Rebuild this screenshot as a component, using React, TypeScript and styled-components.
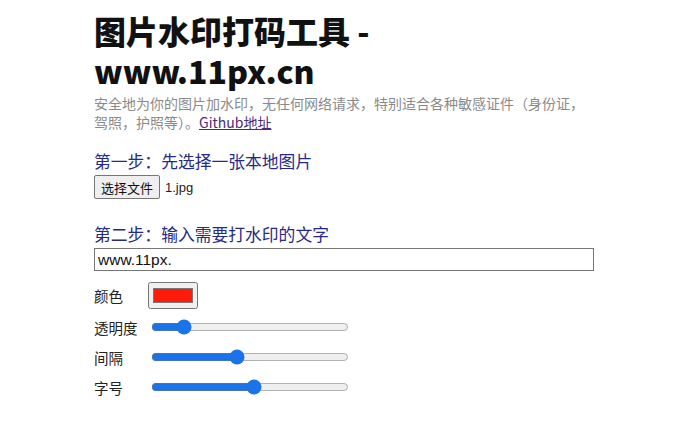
import styled, { createGlobalStyle } from 'styled-components';

const GlobalStyle = createGlobalStyle`
  body {
    margin: 0;
    background: #fff;
    font-family: "Liberation Sans", "Noto Sans CJK SC", sans-serif;
    color: #222;
  }
`;

const Page = styled.div`
  width: 500px;
  margin-left: 94px;
  padding-top: 10px;
`;

const Title = styled.h1`
  margin: 0;
  font-size: 32px;
  line-height: 40px;
  font-weight: 900;
  color: #111;
  font-family: "Noto Sans CJK SC", "Liberation Sans", sans-serif;
`;

const Intro = styled.p`
  margin: 4px 0 0;
  font-size: 14px;
  line-height: 19px;
  color: #8a8a8a;
  font-family: "Noto Sans CJK SC", sans-serif;

  a {
    color: #4b2a7a;
  }
`;

const Step = styled.h3<{ $top: number }>`
  margin: ${(p) => p.$top}px 0 3px;
  font-size: 16.8px;
  line-height: 22px;
  font-weight: 400;
  color: #262a86;
  font-family: "Noto Sans CJK SC", sans-serif;
`;

const FileRow = styled.div`
  display: flex;
  align-items: center;
  gap: 5px;
  font-size: 13px;
  color: #222;
`;

const FileButton = styled.button`
  height: 24px;
  padding: 0 6px;
  background: #efefef;
  border: 1px solid #767676;
  border-radius: 2px;
  font-size: 13px;
  font-family: "Noto Sans CJK SC", sans-serif;
  color: #111;
`;

const TextInput = styled.input`
  box-sizing: border-box;
  width: 500px;
  height: 23px;
  margin: 0;
  padding: 0 3px;
  border: 1px solid #767676;
  font-size: 15.5px;
  font-family: "Liberation Sans", sans-serif;
  color: #111;
`;

const Controls = styled.div`
  display: flex;
  flex-direction: column;
  gap: 6px;
  margin-top: 11px;
`;

const Row = styled.div<{ $h: number }>`
  display: grid;
  grid-template-columns: 54px auto;
  align-items: center;
  height: ${(p) => p.$h}px;
`;

const Label = styled.span`
  font-size: 14.5px;
  color: #222;
  font-family: "Noto Sans CJK SC", sans-serif;
`;

const ColorInput = styled.input`
  width: 50px;
  height: 27px;
  margin: 0;
`;

const Range = styled.input`
  width: 198px;
  margin: 0 0 0 3px;
  accent-color: #1a73e8;
`;

const sliders = [
  { label: '透明度', value: 14 },
  { label: '间隔', value: 43 },
  { label: '字号', value: 52 },
];

export default function App() {
  return (
    <>
      <GlobalStyle />
      <Page>
        <Title>
          图片水印打码工具 -<br />
          www.11px.cn
        </Title>
        <Intro>
          安全地为你的图片加水印，无任何网络请求，特别适合各种敏感证件（身份证，驾照，护照等）。
          <a href="#">Github地址</a>
        </Intro>

        <Step $top={18}>第一步：先选择一张本地图片</Step>
        <FileRow>
          <FileButton>选择文件</FileButton>
          <span>1.jpg</span>
        </FileRow>

        <Step $top={24}>第二步：输入需要打水印的文字</Step>
        <TextInput defaultValue="www.11px." />

        <Controls>
          <Row $h={27}>
            <Label>颜色</Label>
            <ColorInput type="color" defaultValue="#ff1a0a" />
          </Row>
          {sliders.map((s) => (
            <Row $h={24} key={s.label}>
              <Label>{s.label}</Label>
              <Range type="range" min={0} max={100} defaultValue={s.value} />
            </Row>
          ))}
        </Controls>
      </Page>
    </>
  );
}
